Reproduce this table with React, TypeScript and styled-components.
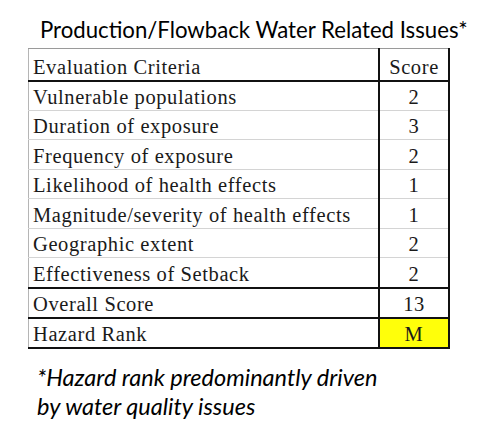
import React from "react";
import styled, { createGlobalStyle } from "styled-components";

const Global = createGlobalStyle`
  html, body { margin: 0; padding: 0; background: #fff; }
  body { width: 500px; height: 428px; overflow: hidden; }
`;

const Page = styled.div`
  width: 500px;
  height: 428px;
  display: flex;
  flex-direction: column;
  background: #fff;
`;

const Title = styled.h1`
  margin: 0;
  padding: 16px 0 0 40px;
  box-sizing: border-box;
  height: 48px;
  font-family: Lato, "Open Sans", sans-serif;
  font-weight: 400;
  font-size: 22.2px;
  line-height: 28px;
  color: #000;
  white-space: nowrap;
`;

const Table = styled.table`
  margin-left: 28px;
  width: 422px;
  border-collapse: collapse;
  font-family: "Liberation Serif", "Times New Roman", serif;
  font-size: 20.5px;
  letter-spacing: 0.6px;
  color: #1a1a1a;
  border-top: 1px solid #9a9a9a;
  border-left: 1px solid #b5b5b5;
  border-right: 2px solid #111;
`;

const Row = styled.tr<{ $h: number; $strong?: boolean }>`
  height: ${(p) => p.$h}px;
  border-bottom: ${(p) => (p.$strong ? "2px solid #111" : "1px solid #d4d4d4")};
`;

const Cell = styled.td`
  padding: 0 0 3px 4px;
  line-height: 20px;
  vertical-align: bottom;
  white-space: nowrap;
`;

const ScoreCell = styled.td<{ $hl?: boolean }>`
  width: 68px;
  text-align: center;
  border-left: 2px solid #111;
  line-height: 20px;
  vertical-align: bottom;
  padding: 0 0 3px 0;
  background: ${(p) => (p.$hl ? "#ffff0a" : "transparent")};
`;

const Note = styled.p`
  margin: 14px 0 0 37px;
  font-family: Lato, "Open Sans", sans-serif;
  font-style: italic;
  font-size: 23.5px;
  line-height: 29px;
  color: #000;
`;

const rows: [string, string][] = [
  ["Vulnerable populations", "2"],
  ["Duration of exposure", "3"],
  ["Frequency of exposure", "2"],
  ["Likelihood of health effects", "1"],
  ["Magnitude/severity of health effects", "1"],
  ["Geographic extent", "2"],
  ["Effectiveness of Setback", "2"],
];

export default function App() {
  return (
    <Page>
      <Global />
      <Title>Production/Flowback Water Related Issues*</Title>
      <Table>
        <tbody>
          <Row $h={32} $strong>
            <Cell>Evaluation Criteria</Cell>
            <ScoreCell>Score</ScoreCell>
          </Row>
          {rows.map(([label, score], i) => (
            <Row key={label} $h={i === 6 ? 30 : 29.5} $strong={i === 6}>
              <Cell>{label}</Cell>
              <ScoreCell>{score}</ScoreCell>
            </Row>
          ))}
          <Row $h={30} $strong>
            <Cell>Overall Score</Cell>
            <ScoreCell>13</ScoreCell>
          </Row>
          <Row $h={30} $strong>
            <Cell>Hazard Rank</Cell>
            <ScoreCell $hl>M</ScoreCell>
          </Row>
        </tbody>
      </Table>
      <Note>
        *Hazard rank predominantly driven
        <br />
        by water quality issues
      </Note>
    </Page>
  );
}
